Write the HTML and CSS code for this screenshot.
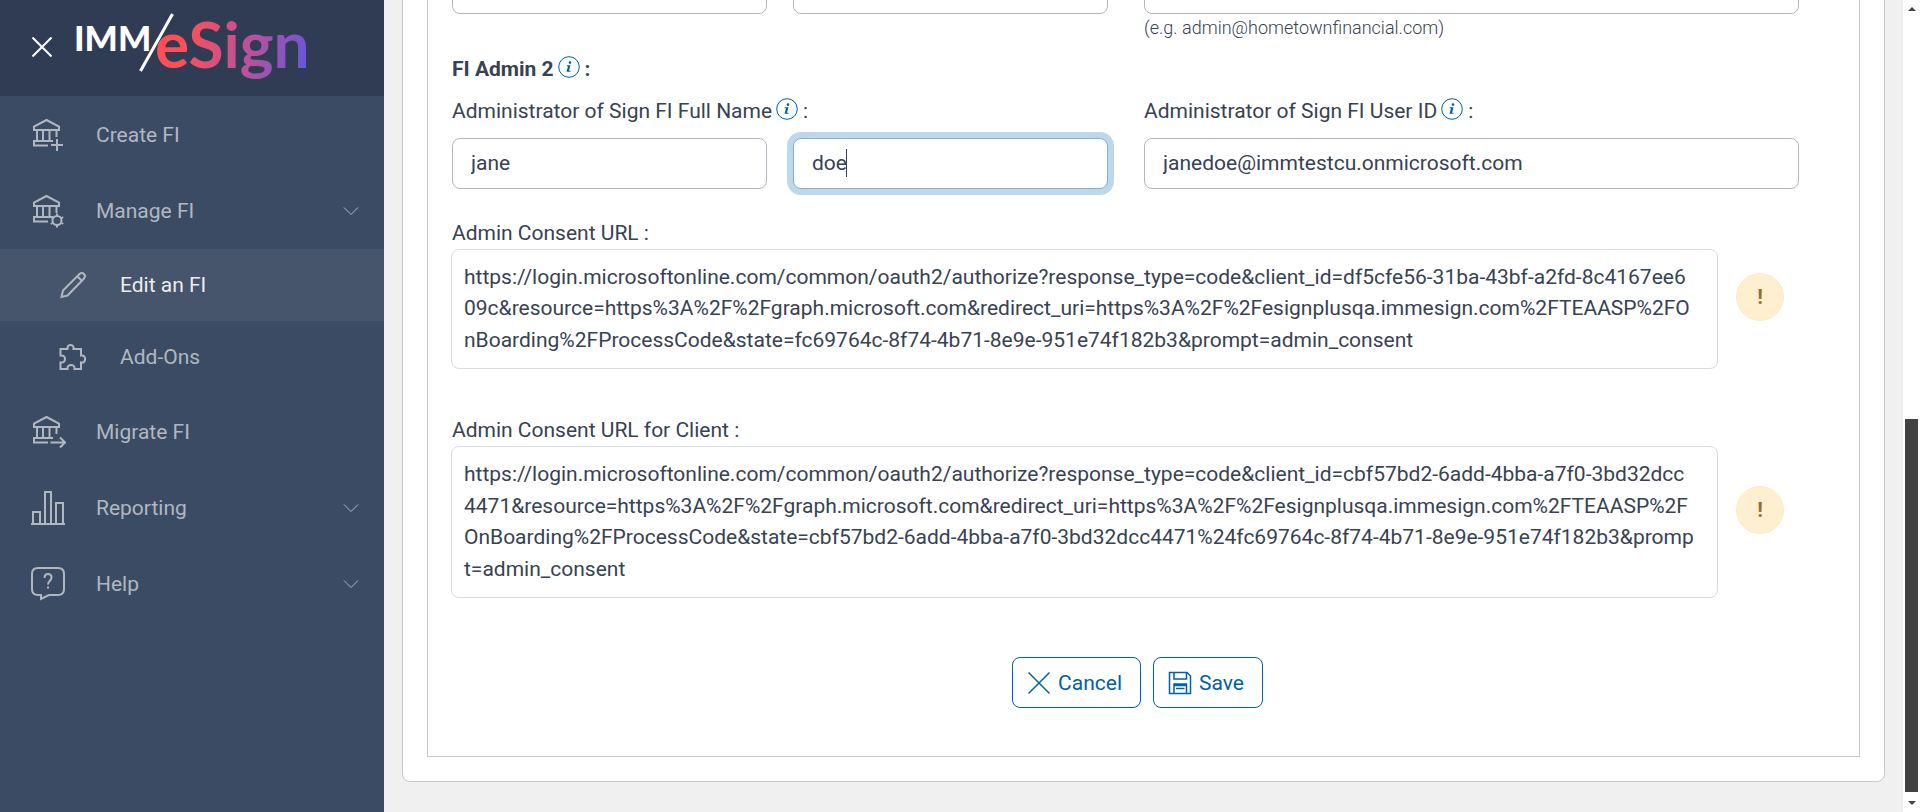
FILE: index.html
```html
<!DOCTYPE html>
<html lang="en">
<head>
<meta charset="utf-8">
<title>IMM eSign - Edit an FI</title>
<meta name="viewport" content="width=device-width, initial-scale=1">
<link rel="stylesheet" href="styles.css">
</head>
<body>
<svg class="defs" width="0" height="0" aria-hidden="true">
  <symbol id="bank" viewBox="0 0 34 34"><path d="M2 12V8.500L14.500 2 27 8.500V12Z M5 12V23 M11 12V23 M17.500 12V23 M24.500 12V19 M4 23H21 M16 27.500H2V23H4"/></symbol>
  <symbol id="chevron" viewBox="0 0 16 10"><path d="M1 1.500L8 8.500 15 1.500"/></symbol>
  <symbol id="info" viewBox="0 0 22 22"><circle cx="11" cy="11" r="10.300" fill="none" stroke="currentColor"/><circle cx="12" cy="6.600" r="1.300"/><path d="M8.800 9.200H12.500L11 14.800H12.500V15.800H8.500L10 10.200H8.600Z"/></symbol>
</svg>
<div class="app">
  <aside class="sidebar">
    <header class="brand">
      <button class="close" type="button" aria-label="Close menu"><svg viewBox="0 0 20 20"><path d="M.500 .500L19.500 19.500M19.500 .500L.500 19.500"/></svg></button>
      <svg class="logo" viewBox="0 0 234 72" role="img" aria-label="IMM/eSign">
        <defs><linearGradient id="fade" gradientUnits="userSpaceOnUse" x1="80" y1="20" x2="230" y2="50"><stop offset="0" stop-color="#ff4e55"/><stop offset=".2" stop-color="#fb5058"/><stop offset=".62" stop-color="#b9529a"/><stop offset="1" stop-color="#6b55d9"/></linearGradient></defs>
        <text class="logo-imm" x="-2" y="39">IMM</text>
        <path class="logo-slash" d="M64.500 59L96.500 2"/>
        <text class="logo-esign" x="79" y="56" fill="url(#fade)">eSign</text>
      </svg>
    </header>
    <nav class="nav">
      <a class="item" href="#"><svg class="icon" viewBox="0 0 34 34"><use href="#bank"/><path d="M25 21V33M19 27H31"/></svg><span>Create FI</span></a>
      <a class="item" href="#"><svg class="icon" viewBox="0 0 34 34"><use href="#bank"/><circle cx="25" cy="26.500" r="4.500"/><path d="M25 19.500V22M25 31V33.500M18.800 23L21.300 24.500M28.700 28.500L31.200 30M18.800 30L21.300 28.500M28.700 24.500L31.200 23"/></svg><span>Manage FI</span><svg class="chevron"><use href="#chevron"/></svg></a>
      <div class="submenu">
        <a class="item sub active" href="#"><svg class="icon" viewBox="0 0 34 34"><path d="M5.500 29L7 22.500 23.500 6Q26 4 28 6T28 10.500L11.500 27.500ZM21.500 8.500L26 13"/></svg><span>Edit an FI</span></a>
        <a class="item sub" href="#"><svg class="icon" viewBox="0 0 34 34"><path d="M4.500 9H11.500C10.500 3.500 18.500 3.500 17.500 9H25V15.500C30.500 14.500 30.500 23.500 25 22.500V29H18.500C19.500 23.500 10.500 23.500 11.500 29H4.500V22.500C10.500 23.500 10.500 14.500 4.500 15.500Z"/></svg><span>Add-Ons</span></a>
      </div>
      <a class="item" href="#"><svg class="icon" viewBox="0 0 34 34"><use href="#bank"/><path d="M18.500 27.500H33M28 22.500L33 27.500 28 32.500"/></svg><span>Migrate FI</span></a>
      <a class="item" href="#"><svg class="icon wide" viewBox="0 0 34 34"><path d="M0 33H34M2 33V21H9V33M14 33V1H20V33M25 33V12H32V33"/></svg><span>Reporting</span><svg class="chevron"><use href="#chevron"/></svg></a>
      <a class="item" href="#"><svg class="icon wide" viewBox="0 0 34 34"><path d="M7 1H27Q33 1 33 7V22Q33 28 27 28H18L10 32V28H7Q1 28 1 22V7Q1 1 7 1ZM13.500 11Q13.500 7 17 7T20.500 10.500C20.500 14 17 13.500 17 17.500M17 19.500V21.500"/></svg><span>Help</span><svg class="chevron"><use href="#chevron"/></svg></a>
    </nav>
  </aside>
  <main class="content">
    <div class="card">
      <form class="panel">
        <div class="fields">
          <input type="text" aria-label="FI Admin 1 first name">
          <input type="text" aria-label="FI Admin 1 last name">
          <div>
            <input type="text" aria-label="FI Admin 1 user ID">
            <p class="hint">(e.g. admin@hometownfinancial.com)</p>
          </div>
        </div>
        <h2 class="group-title">FI Admin 2<svg class="info"><use href="#info"/></svg>:</h2>
        <div class="fields labels">
          <label class="name-label" for="first-name">Administrator of Sign FI Full Name<svg class="info"><use href="#info"/></svg>:</label>
          <label for="user-id">Administrator of Sign FI User ID<svg class="info"><use href="#info"/></svg>:</label>
        </div>
        <div class="fields">
          <input id="first-name" type="text" value="jane">
          <div class="focused"><input id="last-name" type="text" value="doe" aria-label="Last name"><span class="caret"></span></div>
          <input id="user-id" type="text" value="janedoe@immtestcu.onmicrosoft.com">
        </div>
        <label class="url-label" for="consent">Admin Consent URL :</label>
        <div class="url-row">
          <textarea id="consent" rows="3" readonly>https://login.microsoftonline.com/common/oauth2/authorize?response_type=code&amp;client_id=df5cfe56-31ba-43bf-a2fd-8c4167ee609c&amp;resource=https%3A%2F%2Fgraph.microsoft.com&amp;redirect_uri=https%3A%2F%2Fesignplusqa.immesign.com%2FTEAASP%2FOnBoarding%2FProcessCode&amp;state=fc69764c-8f74-4b71-8e9e-951e74f182b3&amp;prompt=admin_consent</textarea>
          <span class="warn">!</span>
        </div>
        <label class="url-label second" for="client-consent">Admin Consent URL for Client :</label>
        <div class="url-row">
          <textarea id="client-consent" rows="4" readonly>https://login.microsoftonline.com/common/oauth2/authorize?response_type=code&amp;client_id=cbf57bd2-6add-4bba-a7f0-3bd32dcc4471&amp;resource=https%3A%2F%2Fgraph.microsoft.com&amp;redirect_uri=https%3A%2F%2Fesignplusqa.immesign.com%2FTEAASP%2FOnBoarding%2FProcessCode&amp;state=cbf57bd2-6add-4bba-a7f0-3bd32dcc4471%24fc69764c-8f74-4b71-8e9e-951e74f182b3&amp;prompt=admin_consent</textarea>
          <span class="warn">!</span>
        </div>
        <div class="actions">
          <button class="btn" type="button"><svg viewBox="0 0 24 24"><path d="M1.500 1.500L22.500 22.500M22.500 1.500L1.500 22.500"/></svg>Cancel</button>
          <button class="btn" type="button"><svg viewBox="0 0 24 24"><path d="M1.500 1.500H19L22.500 5V22.500H1.500ZM6 1.500V8H18.500V1.500M6 22.500V13H18.500V22.500M6 14.500H18.500M8 17.500H16.500"/></svg>Save</button>
        </div>
      </form>
    </div>
  </main>
  <div class="scrollbar" aria-hidden="true"><span class="up"></span><span class="thumb"></span><span class="down"></span></div>
</div>
</body>
</html>
```
FILE: styles.css
```css
* { box-sizing: border-box; }
body {
  margin: 0;
  background: #f0f0f0;
  color: #374253;
  font: 21px/32px Roboto, "Liberation Sans", sans-serif;
}
.defs { position: absolute; }
.app { display: flex; height: 100vh; overflow: hidden; }

/* Sidebar */
.sidebar { flex: 0 0 384px; background: #3c4b64; }
.brand {
  display: flex;
  align-items: flex-start;
  gap: 24px;
  height: 96px;
  padding: 12px 32px;
  background: #303c54;
}
.close { display: flex; margin-top: 25px; padding: 0; border: 0; background: none; }
.close svg { width: 20px; height: 20px; stroke: #fff; stroke-width: 2; fill: none; }
.logo { width: 234px; height: 72px; overflow: visible; }
.logo-imm { font: 900 35px Lato, sans-serif; fill: #fff; }
.logo-esign { font: 700 64px Lato, sans-serif; }
.logo-slash { stroke: #fff; stroke-width: 3; }
.nav { padding-top: 1px; }
.item {
  display: flex;
  align-items: center;
  height: 76px;
  padding: 0 25px 0 32px;
  color: #b1b7c1;
  text-decoration: none;
}
.item span { flex: 1; }
.icon {
  width: 34px;
  height: 34px;
  margin-right: 30px;
  fill: none;
  stroke: #b1b7c1;
  stroke-width: 2;
}
.wide { margin-left: -1px; margin-right: 31px; }
.chevron { width: 16px; height: 10px; fill: none; stroke: #b1b7c1; }
.submenu { padding-bottom: 1px; }
.sub { height: 72px; padding-left: 56px; }
.active { background: #46546c; color: #ebedef; }

/* Content */
.content {
  display: flex;
  flex: 1;
  flex-direction: column;
  justify-content: flex-end;
  min-width: 0;
  padding: 0 18px 30px;
}
.card {
  flex: none;
  padding: 24px;
  border: 1px solid #c8c8c8;
  border-radius: 8px;
  background: #fff;
}
.panel { padding: 24px 60px 48px 24px; border: 1px solid #c8c8c8; }
.fields {
  display: grid;
  grid-template-columns: 315fr 315fr 665fr;
  column-gap: 26px;
}
.fields > :last-child { margin-left: 10px; }
.fields input {
  width: 100%;
  height: 51px;
  padding: 0 18px;
  border: 1px solid #b1b7c1;
  border-radius: 8px;
  background: #fff;
  color: #374253;
  font: inherit;
  outline: 0;
}
.fields > input:last-child { width: auto; }
.hint { margin: 0; font-size: 18px; line-height: 27px; font-weight: 300; }
.group-title { margin: 12px 0 10px; font-size: 21px; line-height: 32px; font-weight: 700; }
.info { width: 22px; height: 22px; margin: 0 5px 0 4px; color: #0060aa; fill: #0060aa; vertical-align: -2px; }
.labels { margin-bottom: 11px; }
.name-label { grid-column: span 2; }
.focused { position: relative; }
.fields .focused input { border-color: #80b0d5; box-shadow: 0 0 0 6px #bfd7ea; }
.caret { position: absolute; left: 53px; top: 11px; width: 1px; height: 28px; background: #374253; }
.url-label { display: block; margin-top: 28px; }
.url-label.second { margin-top: 45px; }
.url-row { display: flex; align-items: center; gap: 18px; margin-left: -1px; }
.url-row textarea {
  flex: 1;
  display: block;
  padding: 12px 21px 12px 12px;
  border: 1px solid #d8dbe0;
  border-radius: 8px;
  color: #374253;
  font: inherit;
  line-height: 1.5;
  word-break: break-all;
  overflow: hidden;
  resize: none;
}
.warn {
  width: 48px;
  height: 48px;
  margin: 0 15px 24px 0;
  border: 1px solid #feeac3;
  border-radius: 50%;
  background: #feefd0;
  color: #936f2b;
  font-weight: 700;
  line-height: 46px;
  text-align: center;
}
.actions { display: flex; justify-content: center; gap: 12px; margin: 59px -24px 0 0; }
.btn {
  display: flex;
  align-items: center;
  gap: 7px;
  height: 51px;
  padding: 0 18px 0 14px;
  border: 1px solid #0060aa;
  border-radius: 8px;
  background: #fff;
  color: #0060aa;
  font: inherit;
}
.btn svg { width: 24px; height: 24px; fill: none; stroke: #0060aa; stroke-width: 1.5; }

/* Page scrollbar */
.scrollbar {
  display: flex;
  flex: 0 0 17px;
  flex-direction: column;
  align-items: center;
  padding: 7px 0;
  background: #fff;
}
.up, .down { border: 4px solid transparent; }
.up { border-top: 0; border-bottom-color: #444; }
.down { border-bottom: 0; border-top-color: #444; }
.thumb { width: 13px; height: 373px; margin: auto 0 9px; background: #424242; }
```
